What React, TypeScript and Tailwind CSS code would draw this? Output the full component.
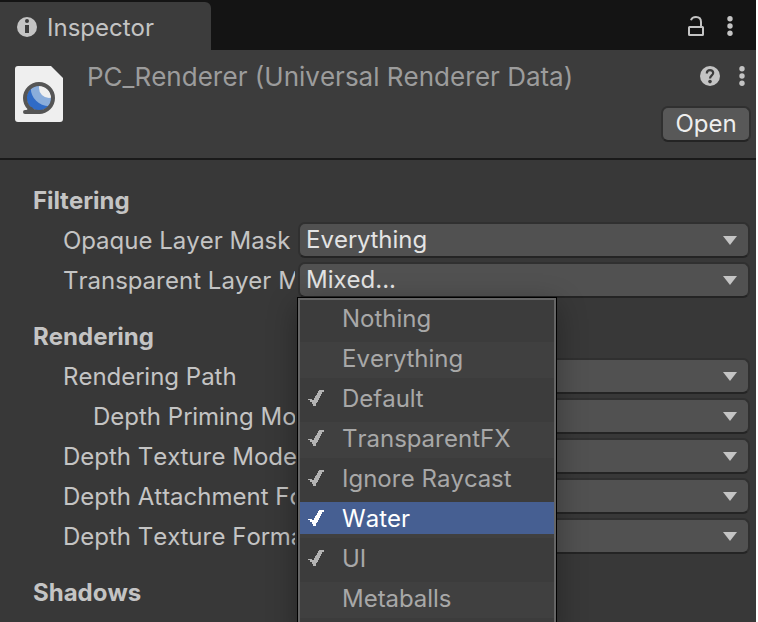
import React from "react";

function Kebab() {
  return (
    <svg width="6" height="20" viewBox="0 0 6 20" fill="#c4c4c4">
      <circle cx="3" cy="2.7" r="2.7" />
      <circle cx="3" cy="10" r="2.7" />
      <circle cx="3" cy="17.3" r="2.7" />
    </svg>
  );
}

function InfoIcon() {
  return (
    <svg width="20" height="20" viewBox="0 0 20 20">
      <circle cx="10" cy="10" r="10" fill="#c4c4c4" />
      <circle cx="10" cy="4" r="2" fill="#3c3c3c" />
      <path d="M8 8h4v8H8z" fill="#3c3c3c" />
    </svg>
  );
}

function LockIcon() {
  return (
    <svg width="16" height="20" viewBox="0 0 16 20" fill="none" stroke="#c4c4c4" strokeWidth="2">
      <rect x="1" y="11" width="14" height="8" rx="0.5" />
      <path d="M3 4.2C3.6 2.2 5.2 1 8 1c3.2 0 5 1.8 5 5v5" />
    </svg>
  );
}

function HelpIcon() {
  return (
    <svg width="20" height="20" viewBox="0 0 20 20">
      <circle cx="10" cy="10" r="10" fill="#c4c4c4" />
      <path d="M6.8 7.5C6.8 5.2 8.1 4.1 10 4.1s3.2 1.1 3.2 2.9c0 2.4-3.2 2.5-3.2 5.6" fill="none" stroke="#3c3c3c" strokeWidth="2.2" />
      <circle cx="10" cy="15.6" r="1.8" fill="#3c3c3c" />
    </svg>
  );
}

function AssetIcon() {
  return (
    <svg width="48" height="56" viewBox="0 0 48 56">
      <defs>
        <clipPath id="ball">
          <circle cx="24" cy="32" r="12.4" />
        </clipPath>
      </defs>
      <path d="M3 0h33l12 12v41a3 3 0 0 1-3 3H3a3 3 0 0 1-3-3V3a3 3 0 0 1 3-3z" fill="#efefef" />
      <g clipPath="url(#ball)">
        <rect x="10" y="18" width="28" height="28" fill="#306bc6" />
        <circle cx="34" cy="22" r="18.2" fill="#8aaddb" />
        <circle cx="34" cy="22" r="10" fill="#efefef" />
      </g>
      <circle cx="24" cy="32" r="14" fill="none" stroke="#555555" strokeWidth="4" />
      <path d="M10 46h14M12 46l4-3" stroke="#555555" strokeWidth="4" strokeLinecap="round" />
    </svg>
  );
}

function Check({ color }: { color: string }) {
  return (
    <svg width="16" height="16" viewBox="0 0 16 16" fill={color} shapeRendering="crispEdges">
      <path d="M11 0h5v2h-2v2h-1v2h-1v2h-1v2h-1v2H9v1H8v3H5v-2H4v-2H2v-2H0V9h4v1h2V8h1V6h1V5h1V3h1V1h1z" />
    </svg>
  );
}

function Dropdown({ value }: { value?: string }) {
  return (
    <div className="flex h-9 w-[452px] shrink-0 items-center justify-between rounded-[7px] border-2 border-[#303030] border-b-[#242424] bg-[#515151] pl-[6px] pr-[10px] text-[#e4e4e4]">
      <span>{value}</span>
      <svg width="16" height="10" viewBox="0 0 16 10" fill="#c4c4c4">
        <path d="M1 1h14L8 10z" />
      </svg>
    </div>
  );
}

type RowProps = { label: string; value?: string; nested?: boolean; fits?: boolean };

function Row({ label, value, nested, fits }: RowProps) {
  return (
    <div className="flex h-10 items-center">
      <div className={`w-[298px] shrink-0 pt-[2px] ${nested ? "pl-[93px]" : "pl-[63px]"} ${fits ? "pr-0" : "pr-[3px]"}`}>
        <div className="overflow-hidden whitespace-nowrap">{label}</div>
      </div>
      <Dropdown value={value} />
    </div>
  );
}

function Heading({ children }: { children: React.ReactNode }) {
  return <h2 className="flex h-10 items-center pl-[33px] pt-[2px] font-bold">{children}</h2>;
}

const layers = [
  { name: "Nothing", checked: false },
  { name: "Everything", checked: false },
  { name: "Default", checked: true },
  { name: "TransparentFX", checked: true },
  { name: "Ignore Raycast", checked: true },
  { name: "Water", checked: true, active: true },
  { name: "UI", checked: true },
  { name: "Metaballs", checked: false },
];

function LayerMenu() {
  return (
    <div className="absolute left-[297px] top-[297px] h-[340px] w-[260px] border border-black bg-[#3c3c3c] shadow-[0_8px_28px_rgba(0,0,0,0.32)]">
      <div className="h-full border-2 border-[#656565] pt-[2px] text-[#a8a8a8]">
        {layers.map((l, i) => (
          <div key={l.name} className="h-10">
            <div className={`h-9 ${i % 2 ? "bg-[#404040]" : ""}`}>
              <div className={`flex h-8 items-center ${l.active ? "bg-[#465f92] text-white" : ""}`}>
                <div className="flex w-[42px] shrink-0 pl-2">
                  {l.checked && <Check color={l.active ? "#ffffff" : "#b4b4b4"} />}
                </div>
                <span className="pt-[2px]">{l.name}</span>
              </div>
            </div>
          </div>
        ))}
      </div>
    </div>
  );
}

export default function App() {
  return (
    <div className="h-[622px] w-[758px] overflow-hidden bg-white">
      <div className="relative h-full w-[756px] overflow-hidden bg-[#383838] font-['Inter',sans-serif] text-[24px] leading-[32px] text-[#c4c4c4] [font-kerning:none]">
        <div className="flex h-[50px] items-end justify-between bg-[#141414]">
          <div className="flex h-12 w-[211px] items-center gap-[10px] rounded-tr-[6px] bg-[#3c3c3c] pl-[17px] pt-[2px]">
            <InfoIcon />
            <span className="pt-[2px]">Inspector</span>
          </div>
          <div className="flex h-12 items-center gap-[23px] pr-[23px]">
            <LockIcon />
            <Kebab />
          </div>
        </div>
        <header className="flex h-[110px] border-b-2 border-[#1a1a1a] bg-[#3c3c3c]">
          <div className="pl-[15px] pt-4">
            <AssetIcon />
          </div>
          <div className="ml-6 mt-[11px] flex-1 whitespace-nowrap text-[26px] text-[#9c9c9c]">PC_Renderer (Universal Renderer Data)</div>
          <div className="flex flex-col items-end pr-[5px] pt-4">
            <div className="flex items-center gap-[19px] pr-[6px]">
              <HelpIcon />
              <Kebab />
            </div>
            <button className="mt-5 flex h-9 w-[90px] items-center justify-center rounded-[7px] border-2 border-[#303030] border-b-[#242424] bg-[#585858] text-[#eeeeee]">
              Open
            </button>
          </div>
        </header>
        <main className="pt-5">
          <Heading>Filtering</Heading>
          <Row label="Opaque Layer Mask" value="Everything" />
          <Row label="Transparent Layer Mask" value="Mixed..." />
          <div className="h-4" />
          <Heading>Rendering</Heading>
          <Row label="Rendering Path" />
          <Row label="Depth Priming Mode" nested />
          <Row label="Depth Texture Mode" fits />
          <Row label="Depth Attachment Format" />
          <Row label="Depth Texture Format" />
          <div className="h-4" />
          <Heading>Shadows</Heading>
        </main>
        <LayerMenu />
      </div>
    </div>
  );
}
